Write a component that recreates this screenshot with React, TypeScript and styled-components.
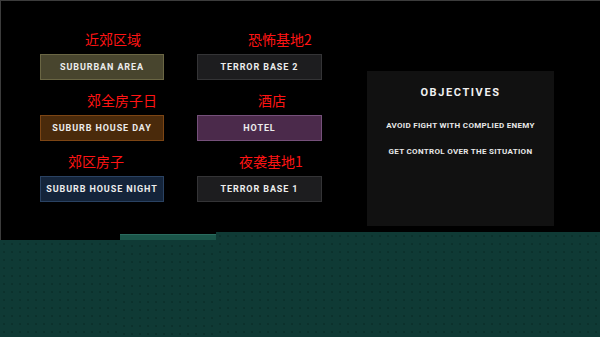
import React from 'react';
import styled, { createGlobalStyle } from 'styled-components';

const GlobalStyle = createGlobalStyle`
  html, body {
    margin: 0;
    padding: 0;
    background: #000;
    overflow: hidden;
  }
  body {
    font-family: Roboto, "Liberation Sans", sans-serif;
  }
`;

type Level = {
  name: string;
  label: string;
  offset: number;
  bg: string;
  border: string;
};

const levels: Level[] = [
  { name: 'SUBURBAN AREA', label: '近郊区域', offset: 45, bg: '#48452e', border: '#6a6644' },
  { name: 'TERROR BASE 2', label: '恐怖基地2', offset: 51, bg: '#1d1d1f', border: '#343436' },
  { name: 'SUBURB HOUSE DAY', label: '郊全房子日', offset: 47, bg: '#4a2a0b', border: '#7c4514' },
  { name: 'HOTEL', label: '酒店', offset: 61, bg: '#4b2a4b', border: '#75507a' },
  { name: 'SUBURB HOUSE NIGHT', label: '郊区房子', offset: 28, bg: '#14243a', border: '#2a4262' },
  { name: 'TERROR BASE 1', label: '夜袭基地1', offset: 42, bg: '#1d1d1f', border: '#343436' },
];

const objectives = ['AVOID FIGHT WITH COMPLIED ENEMY', 'GET CONTROL OVER THE SITUATION'];

const App = () => {
  return (
    <>
      <GlobalStyle />
      <Page>
        <Screen>
          <LevelGrid>
            {levels.map((l) => (
              <LevelCell key={l.name}>
                <Label offset={l.offset}>{l.label}</Label>
                <LevelButton bg={l.bg} edge={l.border}>{l.name}</LevelButton>
              </LevelCell>
            ))}
          </LevelGrid>
          <Objectives>
            <ObjTitle>OBJECTIVES</ObjTitle>
            {objectives.map((o) => (
              <ObjLine key={o}>{o}</ObjLine>
            ))}
          </Objectives>
        </Screen>
        <Ground>
          <GroundPart width={120} height={97} />
          <GroundPart width={96} height={103} raised />
          <GroundPart width={384} height={105} />
        </Ground>
      </Page>
    </>
  );
};

export default App;

const Page = styled.div`
  width: 600px;
  height: 337px;
  display: flex;
  flex-direction: column;
  background: #000;
`;

const Screen = styled.div`
  height: 240px;
  box-sizing: border-box;
  border-top: 1px solid #3c3c3c;
  border-left: 1px solid #3c3c3c;
  display: flex;
  align-items: flex-start;
  padding: 30px 0 0 39px;
`;

const LevelGrid = styled.div`
  display: grid;
  grid-template-columns: 124px 125px;
  column-gap: 33px;
  row-gap: 12px;
`;

const LevelCell = styled.div`
  display: flex;
  flex-direction: column;
  gap: 6px;
`;

const Label = styled.div<{ offset: number }>`
  padding-left: ${(p) => p.offset}px;
  height: 17px;
  line-height: 17px;
  font-family: "Noto Sans CJK SC", sans-serif;
  font-size: 14px;
  color: #ff1414;
  white-space: nowrap;
`;

const LevelButton = styled.div<{ bg: string; edge: string }>`
  height: 26px;
  box-sizing: border-box;
  background: ${(p) => p.bg};
  border: 1px solid ${(p) => p.edge};
  display: flex;
  align-items: center;
  justify-content: center;
  color: #ececec;
  font-weight: 700;
  font-size: 9px;
  letter-spacing: 0.9px;
  white-space: nowrap;
`;

const Objectives = styled.div`
  margin: 40px 0 0 45px;
  width: 187px;
  height: 155px;
  background: #111;
  display: flex;
  flex-direction: column;
  align-items: center;
  padding-top: 15px;
  box-sizing: border-box;
`;

const ObjTitle = styled.div`
  color: #f0f0f0;
  font-weight: 700;
  font-size: 11px;
  letter-spacing: 1.6px;
  margin-bottom: 22px;
`;

const ObjLine = styled.div`
  color: #e8e8e8;
  font-weight: 700;
  font-size: 8px;
  letter-spacing: 0.3px;
  margin-bottom: 17px;
  white-space: nowrap;
`;

const Ground = styled.div`
  display: flex;
  align-items: flex-end;
  margin-top: -8px;
  height: 105px;
`;

const GroundPart = styled.div<{ width: number; height: number; raised?: boolean }>`
  width: ${(p) => p.width}px;
  height: ${(p) => p.height}px;
  background-color: #0f3a35;
  background-image: ${(p) =>
    p.raised
      ? 'linear-gradient(#2a6b5e 0 1px, #1a5549 1px 6px, transparent 6px), radial-gradient(circle, #0c322d 0.7px, transparent 1px)'
      : 'radial-gradient(circle, #0c322d 0.7px, transparent 1px)'};
  background-size: ${(p) => (p.raised ? '100% 100%, 8px 8px' : '8px 8px')};
  background-repeat: ${(p) => (p.raised ? 'no-repeat, repeat' : 'repeat')};
`;
